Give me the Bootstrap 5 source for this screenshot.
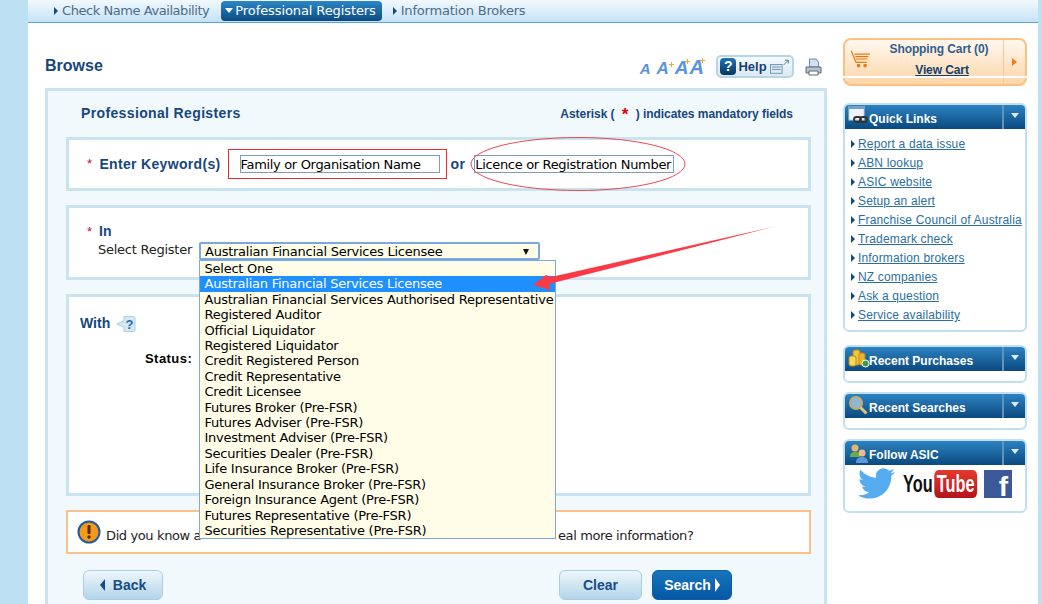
<!DOCTYPE html>
<html lang="en"><head><meta charset="utf-8"><title>Browse</title>
<link rel="stylesheet" href="https://cdn.jsdelivr.net/npm/bootstrap@5.3.0/dist/css/bootstrap.min.css">
<style>
html,body{height:604px;overflow:hidden}
body{background:#bde0f2;font-family:"Liberation Sans",Arial,sans-serif;color:#000}
.shell{position:relative;margin:0 4px 0 28px;height:604px;background:#fff;overflow:hidden}
.topnav{height:23px;background:linear-gradient(#f2f9fd,#c4e2f5);border-bottom:1px solid #5ba3de;padding-left:24px;gap:6px;font:13px/20px "DejaVu Sans",sans-serif;letter-spacing:-.44px;color:#4d6c88}
.topnav .tab{padding:0 6px 0 2px;height:20px;margin-top:1px;white-space:nowrap}
.topnav .tab.on{background:linear-gradient(#2c86c6,#0b4a80);color:#fff;border-radius:4px;padding:0 6px 0 4px;letter-spacing:-.1px}
.topnav .tab.last{padding-left:5px;letter-spacing:-.2px}
.tri-r{display:inline-block;border-left:4px solid #104c7c;border-top:4px solid transparent;border-bottom:4px solid transparent;margin-right:4px}
.tri-d{display:inline-block;border-top:5px solid #fff;border-left:4px solid transparent;border-right:4px solid transparent;margin-right:2px;vertical-align:2px}
.maincol{width:782px;margin-left:17px;flex:none}
.pagehead{height:65px;padding-top:33px;align-items:flex-start}
.pagetitle{font-size:16px;font-weight:700;color:#17477c;margin:0;line-height:20px}
.tools{margin:-1px 5px 0 auto}
.sizes{height:22px;color:#5a93dc;font:italic 700 17px/22px "Liberation Sans",sans-serif;margin-right:11px;white-space:nowrap}
.sizes span{display:inline-block}
.sizes .s1{font-size:15px;margin-right:6px}
.sizes .s2{font-size:17px}
.sizes .s3{font-size:19px;margin-left:1px}
.sizes .s4{font-size:20px}
.plus{display:inline-block;width:5px;height:5px;background:linear-gradient(#f7a52c,#f7a52c) center/5px 1px no-repeat,linear-gradient(#f7a52c,#f7a52c) center/1px 5px no-repeat;vertical-align:7px}
.sizes .s3 .plus{margin-left:-4px;vertical-align:10px}
.sizes .s4 .plus{margin-left:-4px;vertical-align:11px}
.helpbtn{width:78px;height:23px;border:2px solid #b8d5e6;border-radius:5px;background:linear-gradient(#f5fafd,#d9e9f3);font-size:13px;font-weight:700;color:#173f74;padding:0 2px;margin-right:11px;gap:2px}
.qmark{width:17px;height:17px;border-radius:4px;background:linear-gradient(#1c74b7,#08365f);color:#fff;font-size:14px;line-height:17px;text-align:center}
.outerbox{border:3px solid #c9e3f1;background:#f1f9fd;padding:0 13px 0 18px;height:560px}
.boxtitle{height:46px;padding:0 15px;color:#17477c;font-weight:700;align-items:center}
.boxtitle h2{font-size:14px;font-weight:700;margin:-2px 0 0;letter-spacing:.36px}
.mand{font-size:12px;margin:0 3px 0 0;letter-spacing:-.05px}
.mand b{color:#d00;font-size:17px;padding:0 4px;line-height:12px;vertical-align:-2px}
.pane{background:#fff;border:3px solid #c9e3f1}
.kw{height:54px;padding-left:18px;font-size:14px;font-weight:700;color:#17477c;letter-spacing:.33px}
.req{color:#c0104a;font-weight:400;margin-right:7px;font-size:13px}
.redbox{border:1px solid #f02a2a;width:219px;height:30px;margin:0 4px 0 7px;padding-left:11px}
.inp{width:200px;height:18px;border:1px solid #7f9db9;padding:0;font:13px/16px "DejaVu Sans",sans-serif;letter-spacing:-.33px;color:#000;background:#fff;outline:0}
.orword{margin:0 9px 0 0}
.inpane{height:75px;margin-top:14px;padding:14px 0 0 18px}
.inlabel{font-size:14px;font-weight:700;color:#17477c;line-height:19px}
.selrow{margin-left:11px;font:13px/18px "DejaVu Sans",sans-serif;letter-spacing:-.25px;color:#222}
.selwrap{position:relative;width:341px;margin-left:7px}
.selbox{height:18px;border:2px solid #7ba9dd;border-radius:2px;background:#fffde8;color:#000;padding:1px 9px 0 4px;margin-top:1px;line-height:14px}
.selbox::after{content:"";border-top:6px solid #111;border-left:3px solid transparent;border-right:3px solid transparent}
.droplist{position:absolute;left:0;top:19px;width:357px;background:#fffde8;border:1px solid #7ba9dd;margin:0;padding:0;list-style:none;z-index:5;color:#000;white-space:nowrap}
.droplist li{height:15.42px;line-height:15px;padding-left:4.500px}
.droplist li.sel{background:#1e90ff;color:#fff}
.withpane{height:202px;margin-top:14px;padding:16px 0 0 11px}
.withlabel{font-size:14px;font-weight:700;color:#17477c;gap:6px}
.status{font-size:13px;font-weight:700;margin:15px 0 0 65px;letter-spacing:.45px}
.warnpane{height:44px;margin-top:14px;background:#fff;border:2px solid #fbc18a;padding-left:9px;font:13px/18px "DejaVu Sans",sans-serif;letter-spacing:-.38px;color:#1d1d1d;white-space:nowrap;overflow:hidden}
.warnpane .lead-in{margin:8px 0 0 5px;width:452px;flex:none}
.warnpane .tail{margin-top:8px}
.btnrow{margin-top:16px;padding:0 79px 0 17px}
.btn.flat{width:80px;height:30px;padding:0;border:1px solid #a9cfe6;border-radius:6px;background:linear-gradient(#eef6fb,#b3d5ea);color:#164c88;font-size:14px;font-weight:700}
.btn.wide{width:83px}
.btn.go{background:linear-gradient(#1675bd,#0558a6);border-color:#0d5ea6;color:#fff;margin-left:10px}
.sidecol{width:184px;margin-left:16px;flex:none;padding-top:15px}
.cart{position:relative;height:48px;border:2px solid #fdc07f;border-radius:8px;background:linear-gradient(#fff8ef,#fdd5a8);margin-bottom:17px}
.cart::after{content:"";position:absolute;left:-2px;right:-2px;top:36px;height:2px;background:#fff}
.carticon{position:absolute;left:5px;top:10px}
.carttxt{width:118px;margin:-1px 0 0 35px;text-align:center;font-size:12px;font-weight:700;color:#2f5f8e;line-height:21px;letter-spacing:-.1px}
.carttxt a{color:#123f6b;display:block;padding-left:6px}
.cartgo{margin-left:auto;width:22px;border-left:1px solid #f5c79a}
.cartgo::after{content:"";border-left:5px solid #ee7d12;border-top:4px solid transparent;border-bottom:4px solid transparent}
.sbox{border:2px solid #c0e0f2;border-radius:6px;background:#fff;margin-bottom:9px;overflow:hidden}
.sbox.first{margin-bottom:13px}
.shead{height:24px;background:linear-gradient(#2d82c2,#0a497e);color:#fff;font-size:12px;font-weight:700;padding-left:3px;margin:0;line-height:28px}
.shead .ttl{margin-left:-1px;white-space:nowrap}
.shead .dd{margin-left:auto;width:23px;border-left:2px solid #5e93bd;position:relative;flex:none}
.shead .dd::after{content:"";position:absolute;left:7px;top:8px;border-top:5px solid #dcecf7;border-left:4px solid transparent;border-right:4px solid transparent}
.shead svg{flex:none;margin-top:1px}
.qlinks{margin:0;padding:6px 0 5px 6px;list-style:none;font-size:12px;line-height:19px;letter-spacing:.17px}
.qlinks a{color:#2a6f9f}
.qlinks .tri-r{margin-right:3px}
.sblank{height:10px}
.social{height:46px;padding:3px 0 0 13px}
.ytwrap{width:73px;margin:2px 8px 0;flex:none}
.yt{font:700 24px/28px "Liberation Sans",sans-serif;color:#111;white-space:nowrap;transform:scaleX(.68);transform-origin:left}
.yt span{display:inline-block;background:linear-gradient(#e5392f,#b3151a);color:#fff;border-radius:6px;padding:0 4px;margin-left:2px}
.fbk{width:28px;height:28px;margin-top:2px;background:#3b5998;color:#fff;font:700 28px/28px "Liberation Sans",sans-serif;text-align:right;padding:3px 4px 0 0;flex:none}
.annot{position:absolute;left:-28px;top:0;z-index:9;pointer-events:none}
</style></head>
<body>
<div class="shell">
  <nav class="topnav d-flex">
    <div class="tab"><i class="tri-r"></i>Check Name Availability</div>
    <div class="tab on"><i class="tri-d"></i>Professional Registers</div>
    <div class="tab last"><i class="tri-r"></i>Information Brokers</div>
  </nav>
  <div class="d-flex">
    <main class="maincol">
      <div class="pagehead d-flex">
        <h1 class="pagetitle">Browse</h1>
        <div class="tools d-flex align-items-center">
          <div class="sizes"><span class="s1">A</span><span class="s2">A<i class="plus"></i></span><span class="s3">A<i class="plus"></i></span><span class="s4">A<i class="plus"></i></span></div>
          <div class="helpbtn d-flex align-items-center"><span class="qmark">?</span>Help
            <svg width="22" height="16" viewBox="0 0 22 16" fill="none" stroke="#6d96b5"><rect x="1.500" y="5.500" width="12" height="9" fill="#dfeaf2"/><path d="M3 8h9M3 10.500h9"/><path d="M15 6l5-5M16.500 1H20v3.500" stroke="#4b7ca3"/></svg>
          </div>
          <svg width="17" height="18" viewBox="0 0 17 18"><path d="M4.500 1H11l2.500 3v5h-9z" fill="#cfe2f4" stroke="#6c88a6"/><path d="M1 9h15v6H1z" fill="#b9c2c9" stroke="#5d6b76"/><path d="M4 13h9v4H4z" fill="#fff" stroke="#5d6b76"/></svg>
        </div>
      </div>
      <section class="outerbox">
        <div class="boxtitle d-flex justify-content-between">
          <h2>Professional Registers</h2>
          <div class="mand">Asterisk ( <b>*</b> ) indicates mandatory fields</div>
        </div>
        <div class="pane kw d-flex align-items-center">
          <span class="req">*</span>Enter Keyword(s)
          <div class="redbox d-flex align-items-center"><input class="inp" value="Family or Organisation Name"></div>
          <span class="orword">or</span>
          <input class="inp" value="Licence or Registration Number">
        </div>
        <div class="pane inpane">
          <div class="inlabel"><span class="req">*</span>In</div>
          <div class="selrow d-flex">
            <span>Select Register</span>
            <div class="selwrap">
              <div class="selbox d-flex justify-content-between align-items-center">Australian Financial Services Licensee</div>
              <ul class="droplist">
                <li>Select One</li>
                <li class="sel">Australian Financial Services Licensee</li>
                <li>Australian Financial Services Authorised Representative</li>
                <li>Registered Auditor</li>
                <li>Official Liquidator</li>
                <li>Registered Liquidator</li>
                <li>Credit Registered Person</li>
                <li>Credit Representative</li>
                <li>Credit Licensee</li>
                <li>Futures Broker (Pre-FSR)</li>
                <li>Futures Adviser (Pre-FSR)</li>
                <li>Investment Adviser (Pre-FSR)</li>
                <li>Securities Dealer (Pre-FSR)</li>
                <li>Life Insurance Broker (Pre-FSR)</li>
                <li>General Insurance Broker (Pre-FSR)</li>
                <li>Foreign Insurance Agent (Pre-FSR)</li>
                <li>Futures Representative (Pre-FSR)</li>
                <li>Securities Representative (Pre-FSR)</li>
              </ul>
            </div>
          </div>
        </div>
        <div class="pane withpane">
          <div class="withlabel d-flex align-items-center">With
            <svg width="20" height="18" viewBox="0 0 20 18"><path d="M8 1.500h9.500a1.500 1.500 0 0 1 1.500 1.500v12a1.500 1.500 0 0 1-1.500 1.500H8v-4L1 9l7-3.500z" fill="#d4e9f5" stroke="#a9d0e6"/><text x="9.500" y="14" font-family="Liberation Sans" font-size="13" font-weight="700" fill="#2a6da6">?</text></svg>
          </div>
          <div class="status">Status:</div>
        </div>
        <div class="warnpane d-flex align-items-center">
          <svg class="flex-none" width="24" height="24" viewBox="0 0 24 24"><circle cx="12" cy="12" r="10.500" fill="#f39a1e" stroke="#1f5b94" stroke-width="2"/><rect x="10.500" y="5" width="3" height="9" rx="1" fill="#5a2a00"/><circle cx="12" cy="17" r="1.700" fill="#5a2a00"/></svg>
          <span class="lead-in">Did you know a</span><span class="tail">eal more information?</span>
        </div>
        <div class="btnrow d-flex">
          <button class="btn flat d-flex align-items-center justify-content-center" type="button"><svg class="me-2" width="5" height="12" viewBox="0 0 5 12"><path d="M5 0v12L0 6z" fill="#164c88"/></svg>Back</button>
          <button class="btn flat wide ms-auto" type="button">Clear</button>
          <button class="btn flat go d-flex align-items-center justify-content-center" type="button">Search<svg class="ms-1" width="5" height="14" viewBox="0 0 5 14"><path d="M0 0v14l5-7z" fill="#fff"/></svg></button>
        </div>
      </section>
    </main>
    <aside class="sidecol">
      <div class="cart d-flex">
        <svg class="carticon" width="22" height="18" viewBox="0 0 26 22" fill="none" stroke="#ea7a10" stroke-width="1.500"><path d="M1 1l6 14h13M5 5h19M6 8h16M7 11h14"/><circle cx="10" cy="19" r="1.500" fill="#ea7a10"/><circle cx="18" cy="19" r="1.500" fill="#ea7a10"/></svg>
        <div class="carttxt">Shopping Cart (0)<a href="#">View Cart</a></div>
        <div class="cartgo d-flex align-items-center justify-content-center"></div>
      </div>
      <div class="sbox first">
        <h3 class="shead d-flex">
          <svg width="22" height="20" viewBox="0 0 22 20"><rect x="1" y="0" width="15" height="14" fill="#eef4fa" stroke="#bcd0e2"/><rect x="1" y="0" width="15" height="3" fill="#6fa1cf"/><g fill="none" stroke="#333" stroke-width="1.800"><rect x="6" y="11" width="7" height="5" rx="2.500"/><rect x="12" y="11" width="7" height="5" rx="2.500"/></g></svg>
          <span class="ttl">Quick Links</span><span class="dd"></span>
        </h3>
        <ul class="qlinks">
          <li><i class="tri-r"></i><a href="#">Report a data issue</a></li>
          <li><i class="tri-r"></i><a href="#">ABN lookup</a></li>
          <li><i class="tri-r"></i><a href="#">ASIC website</a></li>
          <li><i class="tri-r"></i><a href="#">Setup an alert</a></li>
          <li><i class="tri-r"></i><a href="#">Franchise Council of Australia</a></li>
          <li><i class="tri-r"></i><a href="#">Trademark check</a></li>
          <li><i class="tri-r"></i><a href="#">Information brokers</a></li>
          <li><i class="tri-r"></i><a href="#">NZ companies</a></li>
          <li><i class="tri-r"></i><a href="#">Ask a question</a></li>
          <li><i class="tri-r"></i><a href="#">Service availability</a></li>
        </ul>
      </div>
      <div class="sbox">
        <h3 class="shead d-flex">
          <svg width="22" height="20" viewBox="0 0 22 20"><rect x="5" y="2" width="7" height="15" rx="2" fill="#f3c53a" stroke="#b78a15"/><rect x="1" y="8" width="7" height="10" rx="2" fill="#f8d95c" stroke="#b78a15"/><rect x="11" y="5" width="6" height="12" rx="2" fill="#e7b52c" stroke="#b78a15"/><circle cx="17.500" cy="15.500" r="3.500" fill="#3e9a48" stroke="#fff"/></svg>
          <span class="ttl">Recent Purchases</span><span class="dd"></span>
        </h3>
        <div class="sblank"></div>
      </div>
      <div class="sbox">
        <h3 class="shead d-flex">
          <svg width="22" height="20" viewBox="0 0 22 20" fill="none"><circle cx="8" cy="8" r="6" fill="#8fb6d3" stroke="#c4ad6a" stroke-width="2"/><path d="M12.500 12.500l6 6" stroke="#e3c27a" stroke-width="3"/></svg>
          <span class="ttl">Recent Searches</span><span class="dd"></span>
        </h3>
        <div class="sblank"></div>
      </div>
      <div class="sbox">
        <h3 class="shead d-flex">
          <svg width="22" height="22" viewBox="0 0 22 22"><circle cx="7" cy="6" r="3.500" fill="#e9b56a"/><path d="M2 15c0-4 2-5 5-5s5 1 5 5z" fill="#6cab4d"/><circle cx="14" cy="11" r="3.500" fill="#eebd85"/><path d="M8 21c0-4 2-6 6-6s6 2 6 6z" fill="#5c98d6"/></svg>
          <span class="ttl">Follow ASIC</span><span class="dd"></span>
        </h3>
        <div class="social d-flex">
          <svg class="flex-none" width="37" height="31" viewBox="0 2 24 20"><path fill="#55acee" d="M23.953 4.570a10 10 0 0 1-2.825.775 4.958 4.958 0 0 0 2.163-2.723c-.951.555-2.005.959-3.127 1.184a4.920 4.920 0 0 0-8.384 4.482C7.690 8.095 4.067 6.130 1.640 3.162a4.822 4.822 0 0 0-.666 2.475c0 1.710.870 3.213 2.188 4.096a4.904 4.904 0 0 1-2.228-.616v.06a4.923 4.923 0 0 0 3.946 4.827 4.996 4.996 0 0 1-2.212.085 4.936 4.936 0 0 0 4.604 3.417 9.867 9.867 0 0 1-6.102 2.105c-.390 0-.779-.023-1.170-.067a13.995 13.995 0 0 0 7.557 2.209c9.053 0 13.998-7.496 13.998-13.985 0-.210 0-.420-.015-.630A9.935 9.935 0 0 0 24 4.590z"/></svg>
          <div class="ytwrap"><div class="yt">You<span>Tube</span></div></div>
          <div class="fbk">f</div>
        </div>
      </div>
    </aside>
  </div>
  <svg class="annot" width="1042" height="604" viewBox="0 0 1042 604">
    <ellipse cx="578" cy="164" rx="107" ry="26.500" fill="none" stroke="#f0464e" stroke-width="1"/>
    <polygon points="777,226 551,277 546,275 533,285 550,290 549,284" fill="#fb3a45"/>
  </svg>
</div>
<script src="https://cdn.jsdelivr.net/npm/bootstrap@5.3.0/dist/js/bootstrap.bundle.min.js"></script>
</body></html>
